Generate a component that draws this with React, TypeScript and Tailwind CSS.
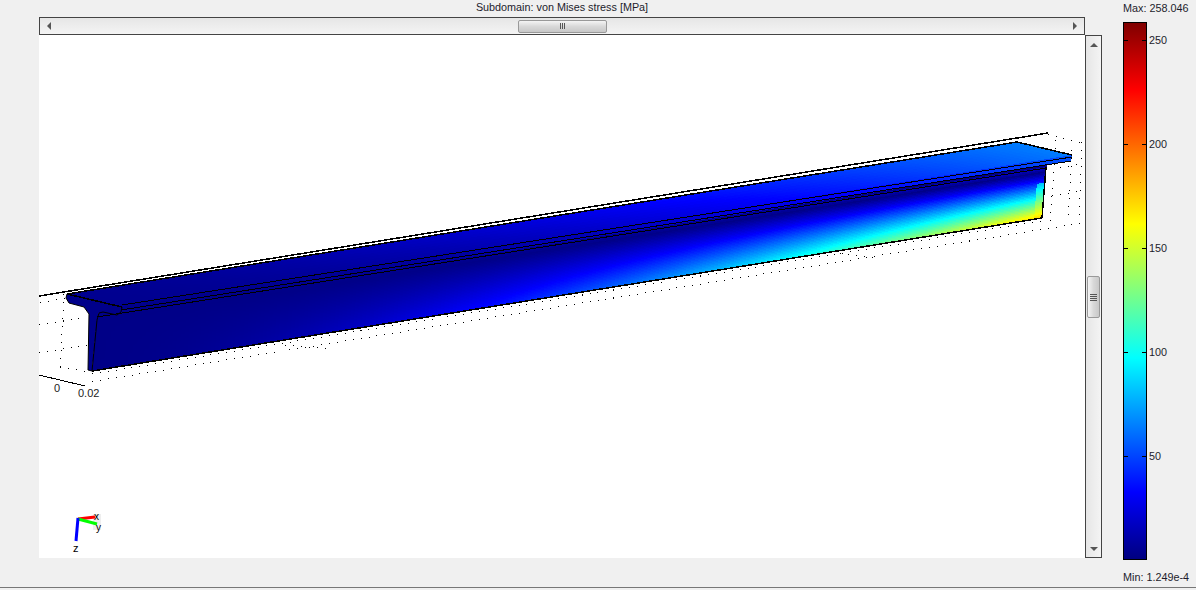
type Pt = [number, number];

const font = "[font-family:'Liberation_Sans',Arial,sans-serif]";

// matlab style jet map, 0..258 MPa
const jet = (val: number) => {
  const t = Math.min(1, Math.max(0, val / 258));
  const c = (x: number) => Math.round(255 * Math.min(1, Math.max(0, 1.5 - Math.abs(4 * t - x))));
  return `rgb(${c(3)},${c(2)},${c(1)})`;
};

const mix = (a: Pt, b: Pt, k: number): Pt => [a[0] + (b[0] - a[0]) * k, a[1] + (b[1] - a[1]) * k];

// corners: a=left top, b=right top, c=right bottom, d=left bottom
function Surface({ a, b, c, d, nu, nv, value }: { a: Pt; b: Pt; c: Pt; d: Pt; nu: number; nv: number; value: (u: number, v: number) => number }) {
  const quads = [];
  for (let i = 0; i < nu; i++) {
    for (let j = 0; j < nv; j++) {
      const p = (u: number, v: number) => mix(mix(a, b, u), mix(d, c, u), v);
      const pts = [p(i / nu, j / nv), p((i + 1) / nu, j / nv), p((i + 1) / nu, (j + 1) / nv), p(i / nu, (j + 1) / nv)];
      quads.push(
        <polygon
          key={`${i}-${j}`}
          points={pts.map((q) => q.join(",")).join(" ")}
          fill={jet(value((i + 0.5) / nu, (j + 0.5) / nv))}
        />
      );
    }
  }
  return <g shapeRendering="crispEdges">{quads}</g>;
}

const webValue = (u: number, v: number) => {
  const bend = (172 * Math.pow(u, 1.9) * Math.abs(v - 0.1)) / 0.9;
  const end = u > 0.992 && v > 0.3 ? 55 * (1 - v) : 0;
  return 2 + bend + end;
};

const flangeValue = (u: number, v: number) => 4 + 60 * Math.pow(u, 1.5) * (1 - 0.7 * v * (1 - u));

type Seg = [number, number, number, number];

const outer: Seg[] = [
  [39, 296, 1048, 133],
  [67, 294, 1017, 142],
  [1017, 142, 1072, 155],
  [67, 294, 122, 307],
  [92, 371, 1042, 218],
  [1046, 167, 1042, 218],
];

// the three edges along the underside of the flange
const inner: Seg[] = [
  [122, 305, 1072, 157],
  [121, 310, 1071, 161],
  [97, 317, 1046, 168],
  [39, 375, 85, 386],
];

const dotted: Seg[] = [
  [92, 374, 1042, 221],
  [92, 381.5, 1082, 223],
  [285, 345, 330, 349],
  [840, 253, 880, 258],
  [39, 325, 82, 318],
  [39, 353, 88, 345],
  [40, 303, 66, 298],
  [64, 294, 60, 370],
  [60, 367, 90, 372],
  [1048, 134, 1083, 143],
  [1060, 168, 1082, 164],
  [1052, 196, 1082, 191],
  [1056, 140, 1050, 222],
  [1072, 150, 1068, 222],
  [1082, 142, 1079, 222],
];

function Lines({ segs, width }: { segs: Seg[]; width: number }) {
  return (
    <g stroke="#000" strokeWidth={width} shapeRendering="crispEdges">
      {segs.map(([x1, y1, x2, y2]) => (
        <line key={`${x1}-${y1}`} x1={x1} y1={y1} x2={x2} y2={y2} />
      ))}
    </g>
  );
}

function Beam() {
  return (
    <svg viewBox="39 35 1046 523" className="block w-[1046px] h-[523px]">
      <g strokeDasharray="1 7">
        <Lines segs={dotted} width={1} />
      </g>

      {/* section at the free end, and the shadowed band under the flange */}
      <polygon
        points="67,294 122,307 121,312 117,315 103,312 99,313 97,320 92,371 88,370 89,314 84,307 69,303 66,298"
        fill="#00008a"
      />
      <polygon points="97,320 99,312 122,307 1072,155 1071,161 1047,165 1046,172" fill="#00008a" shapeRendering="crispEdges" />

      <Surface a={[67, 294]} b={[1017, 142]} c={[1072, 155]} d={[122, 307]} nu={140} nv={8} value={flangeValue} />
      <Surface a={[122, 307]} b={[1072, 155]} c={[1071, 161]} d={[121, 313]} nu={100} nv={1} value={(u) => 3 + 50 * u * u} />
      <Surface a={[97, 316]} b={[1046, 167]} c={[1042, 218]} d={[92, 371]} nu={240} nv={36} value={webValue} />

      <polyline
        points="67,294 66,298 69,303 84,307 89,314 88,370 92,371 97,320 99,313 103,312 117,315 121,312 122,307"
        fill="none"
        stroke="#000"
        strokeWidth="1"
      />

      <Lines segs={outer} width={1.5} />
      <Lines segs={inner} width={1} />

      <text x="54" y="392" fontSize="11" fill="#222">0</text>
      <text x="78" y="397" fontSize="11" fill="#222">0.02</text>

      {/* axis triad */}
      <rect x="93" y="514" width="8" height="16" fill="#eee" />
      <line x1="78" y1="519" x2="95" y2="517" stroke="#ff0000" strokeWidth="3" />
      <line x1="78" y1="519" x2="97" y2="524" stroke="#00ff00" strokeWidth="3" />
      <line x1="78" y1="518" x2="76" y2="541" stroke="#0000ff" strokeWidth="3" />
      <text x="94" y="520" fontSize="10" fill="#000">x</text>
      <text x="96" y="531" fontSize="10" fill="#000">y</text>
      <text x="73" y="552" fontSize="11" fill="#000">z</text>
    </svg>
  );
}

function HScroll() {
  return (
    <div className="w-[1046px] h-[18px] border border-[#444] flex items-center justify-between px-[7px] bg-[linear-gradient(to_bottom,#e6e6e6,#f4f4f4)]">
      <svg width="4" height="8" viewBox="0 0 4 8"><path d="M4 0L0 4l4 4z" fill="#555" /></svg>
      <div className="w-[89px] h-[13px] rounded-[2px] border border-[#999] bg-[linear-gradient(to_bottom,#f4f4f4,#d8d8d8_50%,#c8c8c8)] flex items-center justify-center gap-px">
        <i className="w-px h-[6px] bg-[#555]" />
        <i className="w-px h-[6px] bg-[#555]" />
        <i className="w-px h-[6px] bg-[#555]" />
      </div>
      <svg width="4" height="8" viewBox="0 0 4 8"><path d="M0 0l4 4-4 4z" fill="#555" /></svg>
    </div>
  );
}

function VScroll() {
  return (
    <div className="w-[17px] border border-[#444] flex flex-col items-center pt-[7px] pb-[6px] bg-[linear-gradient(to_right,#e6e6e6,#f4f4f4)]">
      <svg width="8" height="4" viewBox="0 0 8 4"><path d="M0 4l4-4 4 4z" fill="#555" /></svg>
      <div className="mt-[229px] w-[13px] h-[42px] rounded-[2px] border border-[#999] bg-[linear-gradient(to_right,#f4f4f4,#d8d8d8_50%,#c8c8c8)] flex flex-col items-center justify-center gap-px">
        <i className="h-px w-[7px] bg-[#555]" />
        <i className="h-px w-[7px] bg-[#555]" />
        <i className="h-px w-[7px] bg-[#555]" />
        <i className="h-px w-[7px] bg-[#555]" />
      </div>
      <svg className="mt-auto" width="8" height="4" viewBox="0 0 8 4"><path d="M0 0l4 4 4-4z" fill="#555" /></svg>
    </div>
  );
}

function ColorBar() {
  return (
    <div className="w-[94px] pl-[21px] text-[#1c1c2c]">
      <div className="h-[22px] pt-[2px] leading-[13px] whitespace-nowrap">Max: 258.046</div>
      <div className="w-[24px] h-[538px] border border-black pt-[17px] bg-[linear-gradient(to_top,#000080_0%,#0000ff_12.5%,#00ffff_37.5%,#ffff00_62.5%,#ff0000_87.5%,#800000_100%)]">
        {[250, 200, 150, 100, 50].map((n) => (
          <div key={n} className="h-[104px] flex items-start">
            <div className="w-[22px] h-px flex justify-between shrink-0">
              <i className="w-[4px] h-px bg-black" />
              <i className="w-[4px] h-px bg-black" />
            </div>
            <span className="ml-[3px] mt-[-6px] leading-[13px]">{n}</span>
          </div>
        ))}
      </div>
      <div className="pt-[11px] leading-[13px] whitespace-nowrap">Min: 1.249e-4</div>
    </div>
  );
}

export default function App() {
  return (
    <div className={`w-[1196px] h-[590px] overflow-hidden bg-[#f0f0f0] text-[10.8px] ${font} flex flex-col`}>
      <div className="flex h-[587px]">
        <div className="w-[39px]" />
        <div className="w-[1063px]">
          <div className="w-[1046px] h-[17px] text-center leading-[15px] text-[#1c1c2c]">Subdomain: von Mises stress [MPa]</div>
          <HScroll />
          <div className="flex h-[523px]">
            <div className="bg-white w-[1046px]"><Beam /></div>
            <VScroll />
          </div>
        </div>
        <ColorBar />
      </div>
      <div className="border-t border-[#777] h-[3px] bg-[#f0f0f0]" />
    </div>
  );
}
